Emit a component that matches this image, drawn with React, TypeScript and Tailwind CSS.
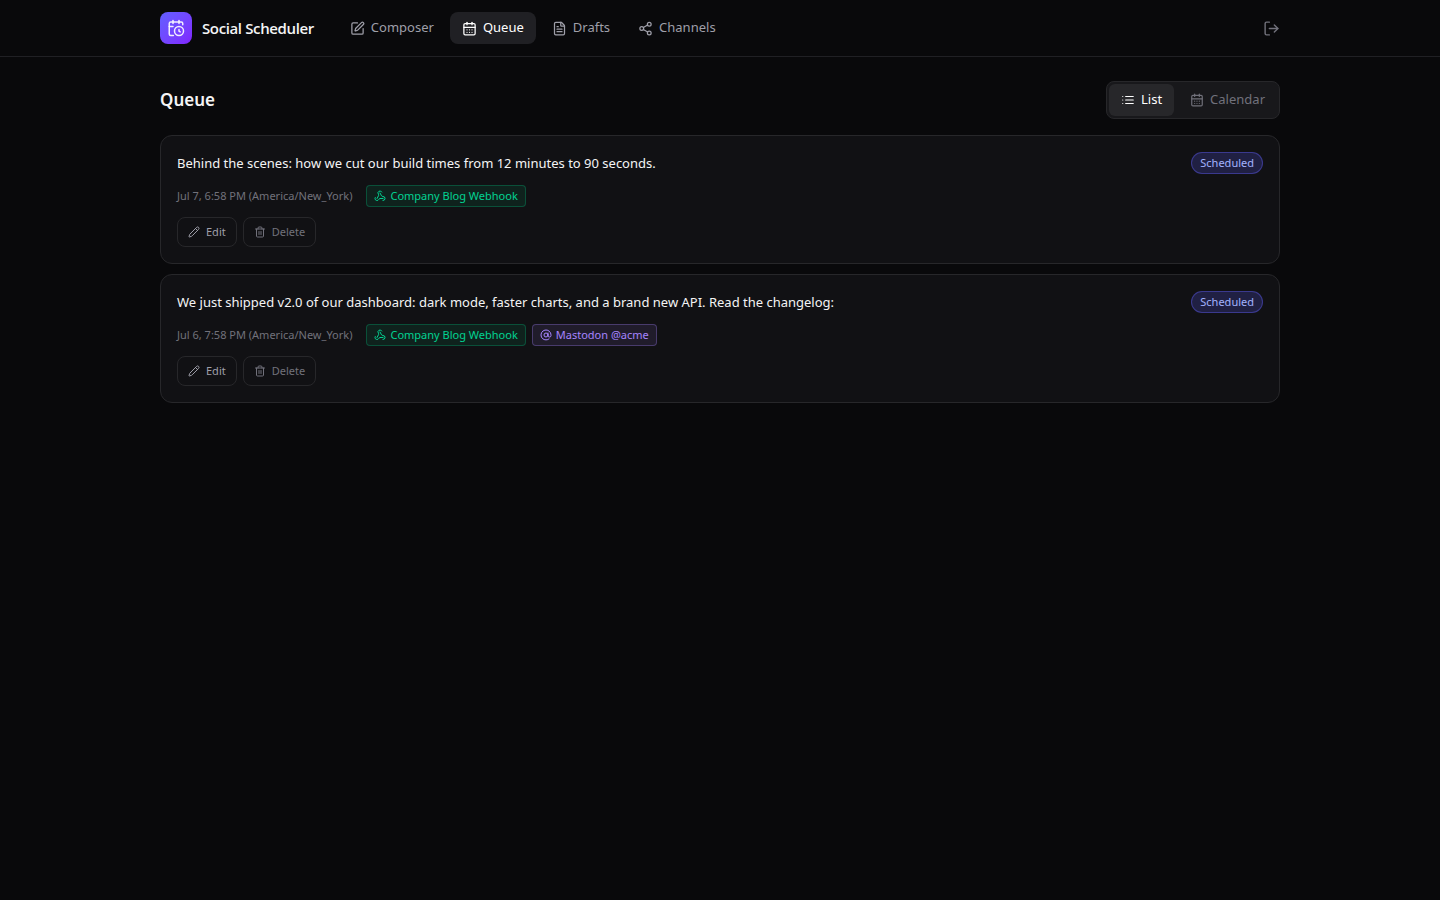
import React, { useState } from "react";
import {
  AtSign,
  CalendarClock,
  CalendarDays,
  FileText,
  LogOut,
  Pencil,
  Share2,
  SquarePen,
  Trash2,
  Webhook,
} from "lucide-react";

const ListIcon = ({ size = 14 }) => (
  <svg
    width={size}
    height={size}
    viewBox="0 0 24 24"
    fill="none"
    stroke="currentColor"
    strokeWidth={2}
    strokeLinecap="round"
    strokeLinejoin="round"
  >
    <path d="M8 6h13M8 12h13M8 18h13M3 6h.01M3 12h.01M3 18h.01" />
  </svg>
);

const navItems = [
  { name: "Composer", icon: SquarePen },
  { name: "Queue", icon: CalendarDays },
  { name: "Drafts", icon: FileText },
  { name: "Channels", icon: Share2 },
];

const views = [
  { name: "List", icon: ListIcon },
  { name: "Calendar", icon: CalendarDays },
];

const posts = [
  {
    id: 1,
    text: "Behind the scenes: how we cut our build times from 12 minutes to 90 seconds.",
    time: "Jul 7, 6:58 PM (America/New_York)",
    channels: [{ type: "webhook", name: "Company Blog Webhook" }],
  },
  {
    id: 2,
    text: "We just shipped v2.0 of our dashboard: dark mode, faster charts, and a brand new API. Read the changelog:",
    time: "Jul 6, 7:58 PM (America/New_York)",
    channels: [
      { type: "webhook", name: "Company Blog Webhook" },
      { type: "mastodon", name: "Mastodon @acme" },
    ],
  },
];

const channelStyles = {
  webhook: "border-emerald-500/30 bg-emerald-500/10 text-emerald-400",
  mastodon: "border-violet-400/30 bg-violet-400/10 text-violet-400",
};

const Header = () => (
  <header className="border-b border-zinc-800/80">
    <div className="mx-auto flex h-14 max-w-6xl items-center px-4">
      <a href="#" className="flex items-center gap-2.5">
        <span className="flex h-8 w-8 items-center justify-center rounded-lg bg-gradient-to-br from-indigo-500 to-violet-600 text-white/90">
          <CalendarClock size={18} strokeWidth={2} />
        </span>
        <span className="font-['Open_Sans',sans-serif] text-[15px] font-semibold tracking-tight text-zinc-100">
          Social Scheduler
        </span>
      </a>
      <nav className="ml-6 flex items-center gap-1">
        {navItems.map(({ name, icon: Icon }) => (
          <a
            key={name}
            href="#"
            className={`flex h-8 items-center gap-1.5 rounded-lg px-3 text-[13px] ${
              name === "Queue" ? "bg-zinc-800/80 text-white" : "text-zinc-400"
            }`}
          >
            <Icon size={15} strokeWidth={2} />
            {name}
          </a>
        ))}
      </nav>
      <button aria-label="Sign out" className="ml-auto text-zinc-500">
        <LogOut size={17} />
      </button>
    </div>
  </header>
);

const PostCard = ({ post }) => (
  <article className="rounded-xl border border-zinc-800 bg-zinc-900/60 p-4">
    <div className="flex items-start justify-between gap-4">
      <p className="text-[13px] leading-[23px] text-zinc-100">{post.text}</p>
      <span className="flex h-[22px] shrink-0 items-center rounded-full border border-indigo-500/40 bg-indigo-500/20 px-2 text-[11px] text-indigo-300">
        Scheduled
      </span>
    </div>
    <div className="mt-2.5 flex flex-wrap items-center gap-1.5 text-[11px]">
      <time className="mr-2 text-zinc-500">{post.time}</time>
      {post.channels.map((channel) => (
        <span
          key={channel.name}
          className={`flex h-[22px] items-center gap-1 rounded border px-[7px] ${channelStyles[channel.type]}`}
        >
          {channel.type === "webhook" ? <Webhook size={12} /> : <AtSign size={12} />}
          {channel.name}
        </span>
      ))}
    </div>
    <div className="mt-2.5 flex gap-1.5 text-[11px]">
      <button className="flex h-[30px] items-center gap-1.5 rounded-lg border border-zinc-800 px-2.5 text-zinc-400">
        <Pencil size={12} />
        Edit
      </button>
      <button className="flex h-[30px] items-center gap-1.5 rounded-lg border border-zinc-800 px-2.5 text-zinc-500">
        <Trash2 size={12} />
        Delete
      </button>
    </div>
  </article>
);

const App = () => {
  const [view, setView] = useState("List");

  return (
    <div className="min-h-screen bg-[#09090b] font-['Noto_Sans','Open_Sans',sans-serif] text-zinc-100">
      <Header />
      <main className="mx-auto max-w-6xl px-4 py-6">
        <div className="mb-4 flex items-center justify-between">
          <h1 className="text-[17px] font-semibold">Queue</h1>
          <div className="flex gap-1 rounded-lg border border-zinc-800 bg-zinc-900 p-0.5">
            {views.map(({ name, icon: Icon }) => (
              <button
                key={name}
                onClick={() => setView(name)}
                className={`flex h-8 items-center gap-1.5 rounded-md px-3 text-[13px] ${
                  view === name ? "bg-zinc-800 text-white" : "text-zinc-500"
                }`}
              >
                <Icon size={14} />
                {name}
              </button>
            ))}
          </div>
        </div>
        <div className="flex flex-col gap-2.5">
          {posts.map((post) => (
            <PostCard key={post.id} post={post} />
          ))}
        </div>
      </main>
    </div>
  );
};

export default App;
